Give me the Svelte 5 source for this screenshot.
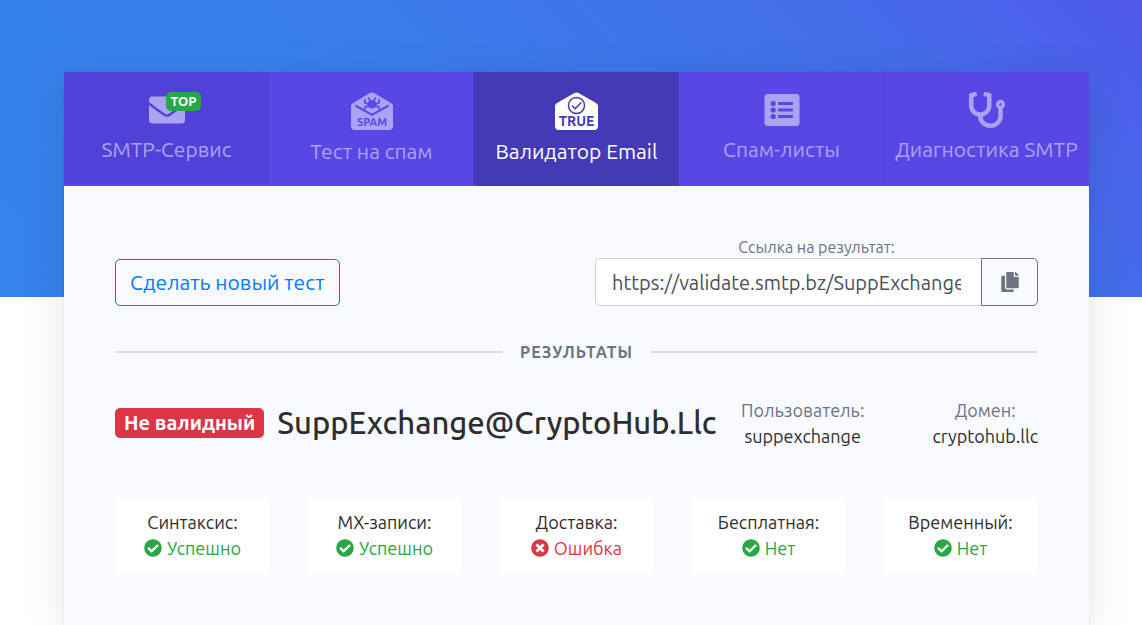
<script>
  const envelope = 'M502.3 190.8c3.9-3.1 9.7-.2 9.7 4.7V400c0 26.5-21.5 48-48 48H48c-26.5 0-48-21.5-48-48V195.6c0-5 5.7-7.8 9.7-4.7 22.4 17.4 52.1 39.5 154.1 113.6 21.1 15.4 56.7 47.8 92.2 47.6 35.7.3 72-32.8 92.3-47.6 102-74.1 131.6-96.3 154-113.7zM256 320c23.2.4 56.6-29.2 73.4-41.4 132.7-96.3 142.8-104.7 173.4-128.7 5.8-4.5 9.2-11.5 9.2-18.9v-19c0-26.5-21.5-48-48-48H48c-26.5 0-48 21.5-48 48v19c0 7.4 3.4 14.3 9.2 18.9 30.6 23.9 40.7 32.4 173.4 128.7 16.8 12.2 50.2 41.8 73.4 41.4z';
  const stethoscope = 'M447.1 112c-34.2.5-62.3 28.4-63 62.6-.5 24.3 12.5 45.6 32 56.8V344c0 57.3-50.2 104-112 104-60 0-109.2-44.1-111.9-99.2C265 333.8 320 269.2 320 192V36.6c0-11.4-8.1-21.3-19.3-23.5L237.8.5c-13-2.6-25.6 5.8-28.2 18.8L206.4 35c-2.6 13 5.8 25.6 18.8 28.2l30.7 6.1v121.4c0 52.9-42.2 96.7-95.1 97.2-53.4.5-96.9-42.7-96.9-96V69.4l30.7-6.1c13-2.6 21.4-15.2 18.8-28.2l-3.1-15.7C107.7 6.4 95.1-2 82.1.6L19.3 13C8.1 15.3 0 25.1 0 36.6V192c0 77.3 55.1 142 128.1 156.8C130.7 439.2 208.6 512 304 512c97 0 176-75.4 176-168V231.4c19.1-11.1 32-31.7 32-55.4 0-35.7-29.2-64.5-64.9-64zm.9 80c-8.8 0-16-7.2-16-16s7.2-16 16-16 16 7.2 16 16-7.2 16-16 16z';
  const check = 'M504 256c0 136.967-111.033 248-248 248S8 392.967 8 256 119.033 8 256 8s248 111.033 248 248zM227.314 387.314l184-184c6.248-6.248 6.248-16.379 0-22.627l-22.627-22.627c-6.248-6.249-16.379-6.249-22.628 0L216 308.118l-70.059-70.059c-6.248-6.248-16.379-6.248-22.628 0l-22.627 22.627c-6.248 6.248-6.248 16.379 0 22.627l104 104c6.249 6.249 16.379 6.249 22.628.001z';
  const times = 'M256 8C119 8 8 119 8 256s111 248 248 248 248-111 248-248S393 8 256 8zm121.6 313.1c4.7 4.7 4.7 12.3 0 17L338 377.6c-4.7 4.7-12.3 4.7-17 0L256 312l-65.1 65.6c-4.7 4.7-12.3 4.7-17 0L134.4 338c-4.7-4.7-4.7-12.3 0-17l65.6-65-65.6-65.1c-4.7-4.7-4.7-12.3 0-17l39.6-39.6c4.7-4.7 12.3-4.7 17 0l65 65.7 65.1-65.6c4.7-4.7 12.3-4.7 17 0l39.6 39.6c4.7 4.7 4.7 12.3 0 17L312 256l65.6 65.1z';
  const copy = 'M320 448v40c0 13.255-10.745 24-24 24H24c-13.255 0-24-10.745-24-24V120c0-13.255 10.745-24 24-24h72v296c0 30.879 25.121 56 56 56h168zm0-344V0H152c-13.255 0-24 10.745-24 24v368c0 13.255 10.745 24 24 24h272c13.255 0 24-10.745 24-24V128H344c-13.2 0-24-10.8-24-24zm120.971-31.029L375.029 7.029A24 24 0 0 0 358.059 0H352v96h96v-6.059a24 24 0 0 0-7.029-16.97z';

  const checks = [
    { name: 'Синтаксис:', value: 'Успешно', ok: true },
    { name: 'MX-записи:', value: 'Успешно', ok: true },
    { name: 'Доставка:', value: 'Ошибка', ok: false },
    { name: 'Бесплатная:', value: 'Нет', ok: true },
    { name: 'Временный:', value: 'Нет', ok: true }
  ];

  let link = $state('https://validate.smtp.bz/SuppExchange@CryptoHub.Llc');
</script>

<div class="page">
  <main class="sheet">
    <nav class="tabs">
      <a href="#smtp" class="tab service">
        <span class="icon">
          <svg width="36" height="36" viewBox="0 0 512 512" aria-hidden="true"><path d={envelope} fill="currentColor" /></svg>
          <span class="top">TOP</span>
        </span>
        <span>SMTP-Сервис</span>
      </a>
      <a href="#spam" class="tab">
        <svg width="42" height="38" viewBox="0 0 42 38">
          <path d="M0 14Q0 12 2 11L19 1Q21 0 23 1L40 11Q42 12 42 14V34Q42 38 38 38H4Q0 38 0 34Z" fill="currentColor" />
          <g fill="none" stroke="#5847e5" stroke-linecap="round" stroke-linejoin="round">
            <path d="M5 13.800 21 22.800 37 13.800" stroke-width="2" />
            <path d="M13.800 7.800V10.500L17.500 12.500M28.200 7.800V10.500L24.500 12.500M17.500 6.200 19.500 9M24.500 6.200 22.500 9M17.500 14.500H14.500L13.800 17M24.500 14.500H27.500L28.200 17" stroke-width="1.600" />
          </g>
          <path d="M17.300 9.500Q21 7 24.700 9.500L25.500 13Q24 16.500 21 16.500T16.500 13Z" fill="#5847e5" />
          <text x="21" y="34" text-anchor="middle" font-size="11" font-weight="600" fill="#5847e5">SPAM</text>
        </svg>
        <span>Тест на спам</span>
      </a>
      <a href="#validator" class="tab active" aria-current="page">
        <svg width="43" height="38" viewBox="0 0 43 38">
          <path d="M0 14Q0 12 2 11L19.500 1Q21.500 0 23.500 1L41 11Q43 12 43 14V34Q43 38 39 38H4Q0 38 0 34Z" fill="currentColor" />
          <circle cx="21.500" cy="13.500" r="8" fill="none" stroke="#453ab5" stroke-width="1.500" />
          <path d="m17 13.500 3.200 3.200 6-6.200" fill="none" stroke="#453ab5" stroke-width="1.600" />
          <text x="21.500" y="34" text-anchor="middle" font-size="14" font-weight="600" fill="#453ab5">TRUE</text>
        </svg>
        <span>Валидатор Email</span>
      </a>
      <a href="#lists" class="tab">
        <svg width="36" height="36" viewBox="0 0 36 36" aria-hidden="true">
          <rect x="0.500" y="2" width="35" height="32" rx="3.500" fill="currentColor" />
          <g fill="#5847e5">
            <circle cx="9.200" cy="11.500" r="2.600" /><circle cx="9.200" cy="18" r="2.600" /><circle cx="9.200" cy="24.500" r="2.600" />
            <rect x="14" y="10" width="15" height="3" rx=".7" /><rect x="14" y="16.500" width="15" height="3" rx=".7" /><rect x="14" y="23" width="15" height="3" rx=".7" />
          </g>
        </svg>
        <span>Спам-листы</span>
      </a>
      <a href="#diag" class="tab">
        <svg width="36" height="36" viewBox="0 0 512 512" aria-hidden="true"><path d={stethoscope} fill="currentColor" /></svg>
        <span>Диагностика SMTP</span>
      </a>
    </nav>

    <div class="body">
      <div class="actions">
        <button class="again">Сделать новый тест</button>
        <div class="share">
          <label for="link">Ссылка на результат:</label>
          <div class="group">
            <input id="link" type="text" readonly value={link} />
            <button class="copy" aria-label="Скопировать">
              <svg width="18" height="20" viewBox="0 0 448 512" aria-hidden="true"><path d={copy} fill="currentColor" /></svg>
            </button>
          </div>
        </div>
      </div>

      <h2>Результаты</h2>

      <div class="summary">
        <div class="address">
          <span class="verdict">Не валидный</span>
          <h1>SuppExchange@CryptoHub.Llc</h1>
        </div>
        <div class="part"><span>Пользователь:</span><br />suppexchange</div>
        <div class="part"><span>Домен:</span><br />cryptohub.llc</div>
      </div>

      <div class="cards">
        {#each checks as item}
          <div class="card">
            <div>{item.name}</div>
            <div class="result" class:bad={!item.ok}>
              <svg width="18" height="18" viewBox="0 0 512 512" aria-hidden="true"><path d={item.ok ? check : times} fill="currentColor" /></svg>
              <span>{item.value}</span>
            </div>
          </div>
        {/each}
      </div>
    </div>
  </main>
</div>

<style>
  :global(body) {
    margin: 0;
    background: #fff;
  }

  .page {
    box-sizing: border-box;
    min-height: 100vh;
    display: flex;
    padding: 72px 53px 0 64px;
    background: linear-gradient(45deg, #3782ec 0%, #3780ea 33%, #426fe9 76%, #5059ea 100%) top / 100% 297px no-repeat;
    font-family: Ubuntu, "Noto Sans", sans-serif;
    font-size: 18px;
    line-height: 26px;
    color: #2e2e2e;
  }

  .page * {
    box-sizing: border-box;
  }

  .sheet {
    flex: 1;
    min-width: 0;
    background: #f9faff;
    box-shadow: 0 0 1px rgba(0, 0, 0, 0.2), 0 8px 40px rgba(0, 0, 0, 0.1);
  }

  .tabs {
    display: grid;
    grid-template-columns: repeat(5, 1fr);
    background: #5847e5;
  }

  .tab {
    display: flex;
    flex-direction: column;
    align-items: center;
    gap: 6px;
    padding: 19px 0 18px;
    border: solid #5847e5;
    border-width: 1px 0 2px;
    box-shadow: inset -1px 0 #4d3fd0;
    font-size: 21px;
    line-height: 30px;
    color: #aba3f2;
    text-decoration: none;
    white-space: nowrap;
  }

  .tab:last-child {
    box-shadow: none;
  }

  .tab svg {
    display: block;
  }

  .service {
    background: #5042d8;
  }

  .active {
    background: #453ab5;
    border-color: #453ab5;
    color: #fff;
  }

  .icon {
    position: relative;
  }

  .top {
    position: absolute;
    left: 17px;
    top: 0;
    padding: 0 5px;
    border-radius: 5px;
    background: #28a745;
    color: #fff;
    font-size: 13px;
    font-weight: 700;
    line-height: 19px;
  }

  .body {
    padding: 50px 51px;
  }

  .actions {
    display: flex;
    align-items: flex-end;
    justify-content: space-between;
  }

  button,
  input {
    font-family: inherit;
    font-size: 20px;
  }

  .again {
    height: 47px;
    padding: 0 14px 2px;
    border: 1px solid #007bff;
    border-radius: 5px;
    background: transparent;
    color: #007bff;
    font-size: 21px;
  }

  .share {
    width: 48%;
  }

  label {
    display: block;
    font-size: 16px;
    line-height: 22px;
    text-align: center;
    color: #6c757d;
  }

  .group {
    display: flex;
    height: 48px;
  }

  input {
    flex: 1;
    min-width: 0;
    padding: 0 20px 0 16px;
    border: 1px solid #ced4da;
    border-right: 0;
    border-radius: 5px 0 0 5px;
    background: #fff;
    color: #495057;
  }

  .copy {
    display: flex;
    align-items: center;
    justify-content: center;
    width: 57px;
    border: 1px solid #6c757d;
    border-radius: 0 5px 5px 0;
    background: transparent;
    color: #6c757d;
  }

  h2 {
    display: flex;
    align-items: center;
    gap: 17px;
    margin: 34px 0 33px;
    font-size: 16px;
    font-weight: 700;
    line-height: 24px;
    letter-spacing: 1px;
    text-transform: uppercase;
    color: #6c757d;
  }

  h2::before,
  h2::after {
    content: "";
    flex: 1;
    height: 2px;
    background: #dcdee3;
  }

  .summary {
    display: grid;
    grid-template-columns: 1fr auto auto;
    align-items: center;
  }

  .address {
    display: flex;
    align-items: center;
    gap: 13px;
  }

  .verdict {
    padding: 0 9px;
    border-radius: 5px;
    background: #dc3545;
    color: #fff;
    font-size: 20px;
    font-weight: 700;
    line-height: 30px;
    white-space: nowrap;
  }

  h1 {
    margin: 0;
    font-size: 31px;
    font-weight: 500;
    line-height: 36px;
  }

  .part {
    text-align: center;
  }

  .part + .part {
    margin-left: 68px;
  }

  .part span {
    color: #6c757d;
  }

  .cards {
    display: grid;
    grid-template-columns: repeat(5, 1fr);
    gap: 37px;
    margin-top: 49px;
  }

  .card {
    padding: 11px 0 13px;
    background: #fff;
    text-align: center;
  }

  .result {
    display: flex;
    align-items: center;
    justify-content: center;
    gap: 5px;
    color: #28a745;
  }

  .bad {
    color: #dc3545;
  }
</style>
